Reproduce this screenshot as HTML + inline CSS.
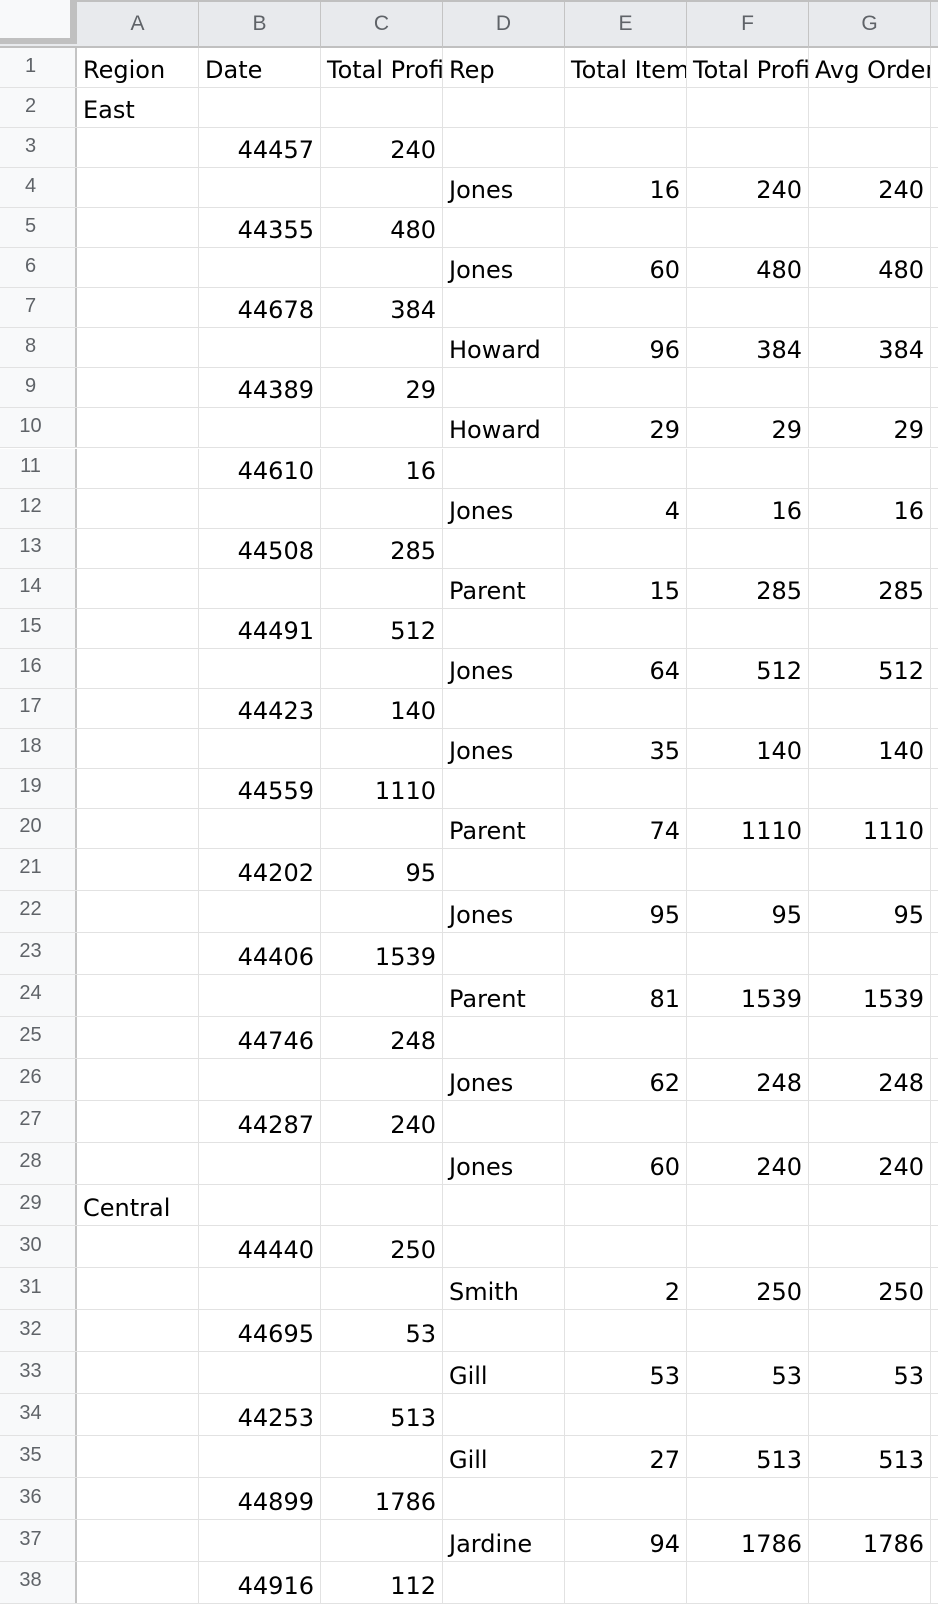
<!DOCTYPE html>
<html><head><meta charset="utf-8"><style>
*{margin:0;padding:0;box-sizing:border-box}
body{width:938px;height:1604px;overflow:hidden;background:#fff;font-family:"DejaVu Sans","Liberation Sans",sans-serif;position:relative}
.hd{position:absolute;left:0;top:0;width:938px;height:48px;background:#e8eaed;border-top:2px solid #c0c0c0;border-bottom:2px solid #c0c0c0;display:flex}
.hd div{width:122px;height:46px;border-right:1px solid #c4c4c4;color:#5f6368;font-family:"Liberation Sans",sans-serif;font-size:21px;text-align:center;line-height:44px;flex:none}
.hd .c0{width:77px;background:#f8f9fa;border-right:7px solid #c0c0c0;border-bottom:6px solid #c0c0c0;height:44px;margin-top:-2px;border-top:0}
.r{position:absolute;left:0;width:938px;display:flex;border-bottom:1px solid #e2e2e2}
.r div{width:122px;flex:none;border-right:1px solid #e2e2e2;font-size:24px;color:#000;white-space:nowrap;overflow:hidden;padding:0 6px;display:flex;align-items:flex-end;padding-bottom:3px}
.r .n{width:77px;background:#f8f9fa;color:#5f6368;font-family:"Liberation Sans",sans-serif;font-size:20px;justify-content:center;align-items:center;padding:0 14px 3px 0;border-right:2px solid #c4c4c4;border-bottom:0}
.r .rt{justify-content:flex-end}
</style></head><body>
<div class="hd"><div class="c0"></div><div>A</div><div>B</div><div>C</div><div>D</div><div>E</div><div>F</div><div>G</div><div></div></div>
<div id="g"></div>
<script>
var d=[
["Region","Date","Total Profit","Rep","Total Items","Total Profit","Avg Order"],
["East"],
["","44457","240"],["","","","Jones","16","240","240"],
["","44355","480"],["","","","Jones","60","480","480"],
["","44678","384"],["","","","Howard","96","384","384"],
["","44389","29"],["","","","Howard","29","29","29"],
["","44610","16"],["","","","Jones","4","16","16"],
["","44508","285"],["","","","Parent","15","285","285"],
["","44491","512"],["","","","Jones","64","512","512"],
["","44423","140"],["","","","Jones","35","140","140"],
["","44559","1110"],["","","","Parent","74","1110","1110"],
["","44202","95"],["","","","Jones","95","95","95"],
["","44406","1539"],["","","","Parent","81","1539","1539"],
["","44746","248"],["","","","Jones","62","248","248"],
["","44287","240"],["","","","Jones","60","240","240"],
["Central"],
["","44440","250"],["","","","Smith","2","250","250"],
["","44695","53"],["","","","Gill","53","53","53"],
["","44253","513"],["","","","Gill","27","513","513"],
["","44899","1786"],["","","","Jardine","94","1786","1786"],
["","44916","112"]];
var h="",y=48;
for(var i=0;i<d.length;i++){var hh=i<20?40.05:41.94;
h+='<div class="r" style="top:'+y+'px;height:'+hh+'px"><div class="n">'+(i+1)+'</div>';
for(var j=0;j<8;j++){var v=d[i][j]||"";var num=/^\d+$/.test(v);h+='<div'+(num?' class="rt"':'')+'>'+v+'</div>';}
h+='</div>';y+=hh;}
document.getElementById("g").innerHTML=h;
</script>
</body></html>
